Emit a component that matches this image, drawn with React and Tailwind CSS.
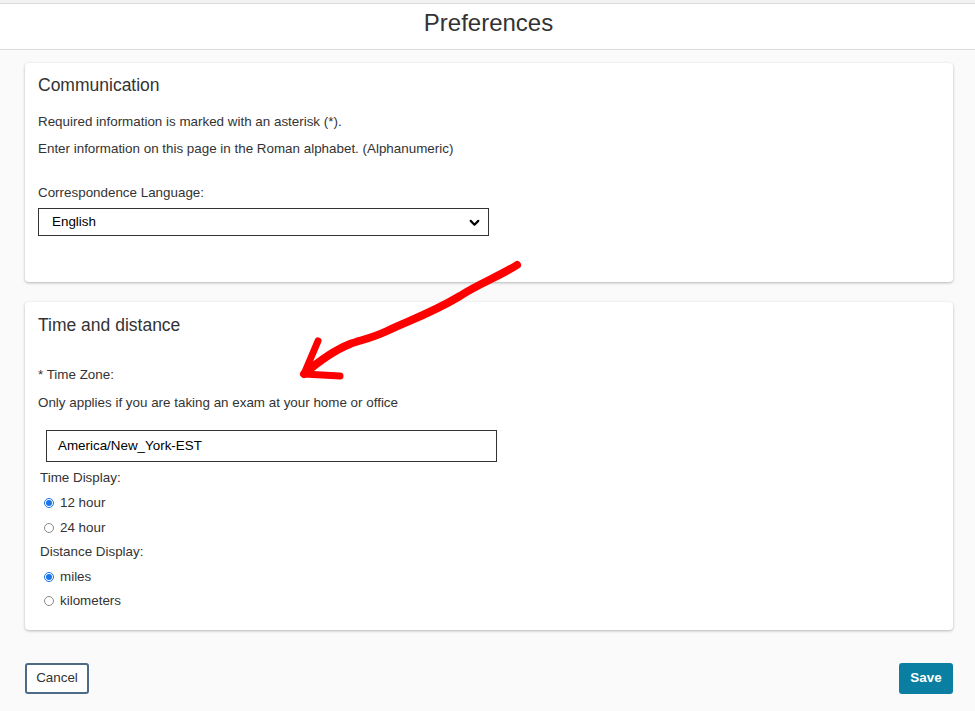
import React from "react";

const Radio = ({ checked }) => (
    <span className={`w-[10px] h-[10px] rounded-full border flex items-center justify-center ${checked ? "border-[#1a73e8]" : "border-[#8a8a8a] bg-white"}`}>
        {checked && <span className="w-[6px] h-[6px] rounded-full bg-[#1a73e8]" />}
    </span>
);

const RadioRow = ({ label, checked, className = "" }) => (
    <div className={`flex items-center gap-[6px] pl-[6px] h-[16px] text-[13.4px] leading-[16px] ${className}`}>
        <Radio checked={checked} />
        <span>{label}</span>
    </div>
);

const App = () => {
    return (
        <div className="relative min-h-[711px] bg-[#fafafa] text-[#333] font-['Liberation_Sans',Arial,sans-serif]">
            {/* Header */}
            <div className="h-[3px] bg-[#f2f2f2]" />
            <div className="h-[47px] bg-white border-y border-[#dcdcdc] flex items-center justify-center">
                <h1 className="text-[24px] leading-[28px] text-[#333] -mt-[8px] ml-[2px]">Preferences</h1>
            </div>

            <div className="pl-[25px] pr-[22px] pt-[13px]">
                {/* Communication */}
                <section className="bg-white rounded-[4px] shadow-[0_1px_3px_rgba(0,0,0,0.28)] px-[13px] pt-[12px] pb-[46px]">
                    <h2 className="text-[17.5px] leading-[20px] text-[#333]">Communication</h2>
                    <p className="mt-[19px] text-[13.4px] leading-[16px]">Required information is marked with an asterisk (*).</p>
                    <p className="mt-[11px] text-[13.4px] leading-[16px]">Enter information on this page in the Roman alphabet. (Alphanumeric)</p>
                    <p className="mt-[28px] text-[13.4px] leading-[16px]">Correspondence Language:</p>
                    <div className="mt-[7px] w-[451px] h-[28px] border border-[#333] flex items-center justify-between pl-[13px] pr-[7px] text-[13.4px] text-black">
                        <span>English</span>
                        <svg width="13" height="13" viewBox="0 0 24 24" fill="none" stroke="black" strokeWidth="4" strokeLinecap="round" strokeLinejoin="round">
                            <path d="M5 9l7 7 7-7" />
                        </svg>
                    </div>
                </section>

                {/* Time and distance */}
                <section className="mt-[20px] bg-white rounded-[4px] shadow-[0_1px_3px_rgba(0,0,0,0.28)] px-[13px] pt-[13px] pb-[21px]">
                    <h2 className="text-[17.5px] leading-[20px] text-[#333]">Time and distance</h2>
                    <p className="mt-[32px] text-[13.4px] leading-[16px]">* Time Zone:</p>
                    <p className="mt-[12px] text-[13.4px] leading-[16px]">Only applies if you are taking an exam at your home or office</p>
                    <div className="mt-[19px] ml-[8px] w-[451px] h-[32px] border border-[#333] flex items-center pl-[11px] text-[13.4px] text-black">
                        America/New_York-EST
                    </div>
                    <p className="mt-[8px] ml-[2px] text-[13.4px] leading-[16px]">Time Display:</p>
                    <RadioRow label="12 hour" checked className="mt-[9px]" />
                    <RadioRow label="24 hour" className="mt-[9px]" />
                    <p className="mt-[8px] ml-[2px] text-[13.4px] leading-[16px]">Distance Display:</p>
                    <RadioRow label="miles" checked className="mt-[9px]" />
                    <RadioRow label="kilometers" className="mt-[8px]" />
                </section>

                {/* Actions */}
                <div className="mt-[33px] flex justify-between items-center">
                    <button className="w-[64px] h-[31px] bg-white border-2 border-[#4d6a86] rounded-[3px] text-[13.4px] text-[#333]">
                        Cancel
                    </button>
                    <button className="w-[54px] h-[31px] bg-[#0a7fa2] rounded-[3px] text-[13.4px] font-bold text-white">
                        Save
                    </button>
                </div>
            </div>

            {/* Hand-drawn red annotation arrow */}
            <svg className="absolute left-0 top-0 pointer-events-none" width="975" height="711" viewBox="0 0 975 711">
                <path
                    d="M517 265 C500 276 478 284 460 296 C430 314 405 322 387 331 C370 339 360 340 350 344 C335 350 318 362 304 374"
                    fill="none" stroke="#ff0000" strokeWidth="8" strokeLinecap="round" strokeLinejoin="round"
                />
                <path d="M318 341 L304 374 L340 376" fill="none" stroke="#ff0000" strokeWidth="7" strokeLinecap="round" strokeLinejoin="round" />
            </svg>
        </div>
    );
};

export default App;
